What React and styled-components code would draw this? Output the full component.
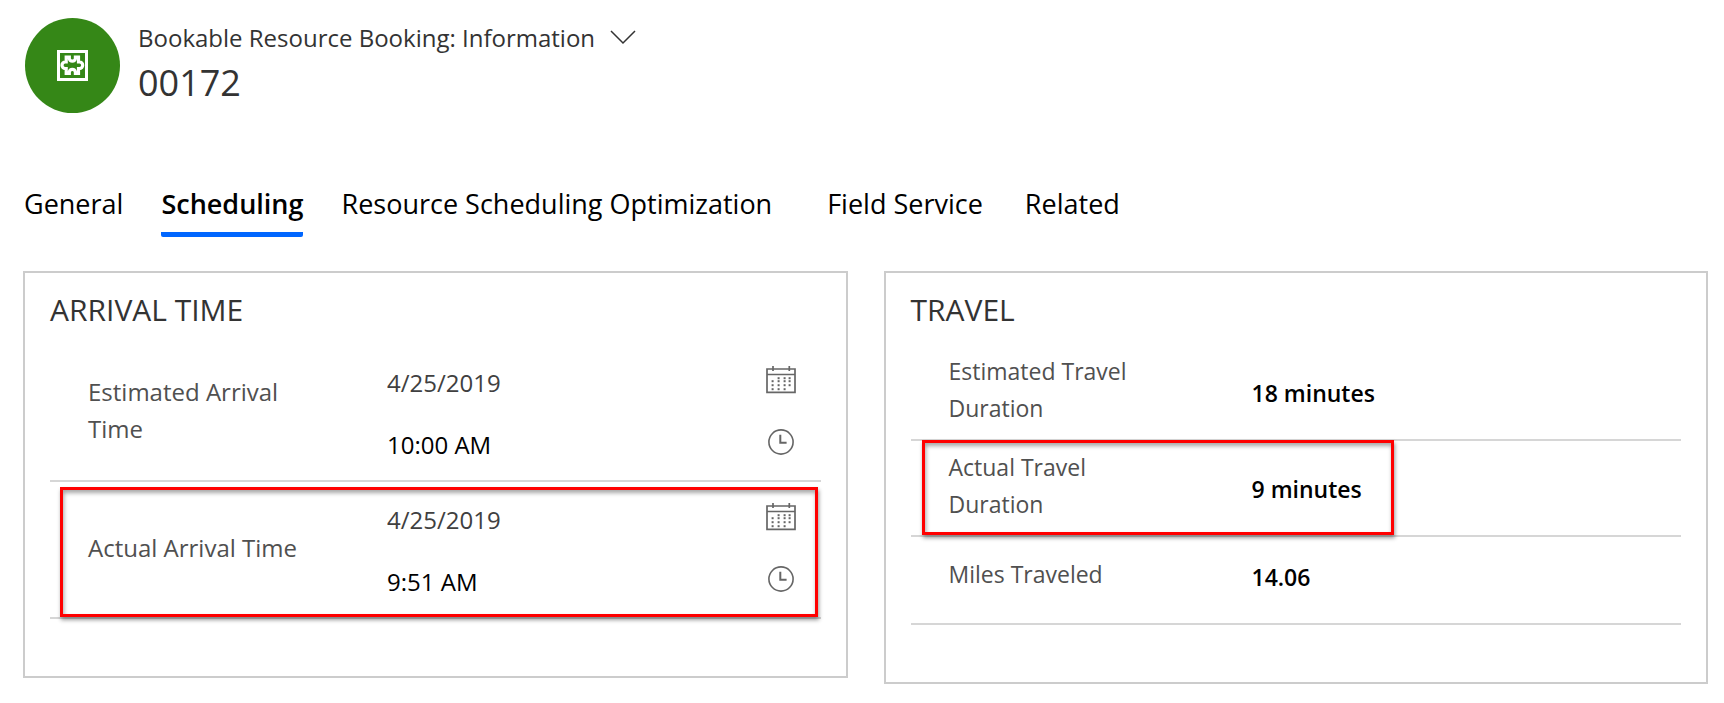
import React, { useId, useState } from "react";
import styled, { createGlobalStyle } from "styled-components";

const GlobalStyle = createGlobalStyle`
  * { box-sizing: border-box; }
  body {
    margin: 0;
    background: #fff;
    color: #333;
    font-family: "Segoe UI", "Open Sans", "Noto Sans", sans-serif;
    font-size: 24px;
  }
  button, input { font: inherit; color: inherit; }
`;

const Page = styled.main`
  padding: 18px 16px 18px 23px;
`;

const Header = styled.header`
  display: flex;
  align-items: flex-start;
  gap: 18px;
  padding-left: 2px;
`;

const EntityBadge = styled.div`
  flex: none;
  display: grid;
  place-items: center;
  width: 95px;
  height: 95px;
  border-radius: 50%;
  background: #358717;
`;

const HeaderText = styled.div`
  display: flex;
  flex-direction: column;
`;

const FormName = styled.div`
  display: flex;
  align-items: center;
  gap: 15px;
  line-height: 40px;
`;

const RecordTitle = styled.h1`
  margin: 0;
  font-size: 36px;
  font-weight: 400;
  line-height: 50px;
`;

const PlainButton = styled.button`
  display: flex;
  flex: none;
  padding: 0;
  border: 0;
  background: none;
  cursor: pointer;
`;

const PickerButton = styled(PlainButton)`
  margin-right: 25px;
  padding-bottom: 6px;
  color: #666;
`;

const TabList = styled.nav`
  display: flex;
  gap: 38px;
  margin-top: 67px;
  padding-left: 1px;
`;

const Tab = styled.button`
  margin-right: ${(p) => p.$extraSpace || "0"};
  padding: 0 0 9px;
  border: 0;
  background: linear-gradient(#0066ff, #0066ff) bottom / 100% ${(p) => (p.$active ? "5px" : "0")} no-repeat;
  border-radius: 2px;
  color: #000;
  font-size: 27px;
  font-weight: ${(p) => (p.$active ? 600 : 400)};
  line-height: 48px;
  white-space: nowrap;
  cursor: pointer;
`;

const Panels = styled.div`
  display: grid;
  grid-template-columns: 1fr 1fr;
  align-items: start;
  gap: 36px;
  margin-top: 34px;
`;

const Panel = styled.section`
  padding: 17px 25px 57px;
  border: 2px solid #ccc;
`;

const PanelTitle = styled.h2`
  margin: 0 0 15px;
  font-size: 30px;
  font-weight: 400;
  line-height: 40px;
`;

const Row = styled.div`
  position: relative;
  display: grid;
  grid-template-columns: ${(p) => p.$labelWidth} 1fr;
  align-items: center;
  border-bottom: 2px solid #d6d6d6;
`;

const DateTimeRow = styled(Row)`
  padding: 7px 0 4px;
`;

const ValueRow = styled(Row)`
  min-height: ${(p) => (p.$short ? "88px" : "96px")};
  padding-bottom: ${(p) => (p.$short ? "12px" : "4px")};
  font-size: 23px;
`;

const Label = styled.label`
  padding: 0 80px 0 38px;
  color: #505050;
  line-height: 37px;
`;

const DateTimeLabel = styled(Label)`
  padding-right: 70px;
  padding-bottom: 8px;
`;

const Field = styled.div`
  display: flex;
  align-items: center;
  height: 62px;
`;

const TextInput = styled.input`
  flex: 1;
  min-width: 0;
  width: 100%;
  padding: 0;
  border: 0;
  outline: 0;
  background: none;
  line-height: 32px;
  color: ${(p) => (p.$muted ? "#404040" : "#000")};
`;

const ValueInput = styled(TextInput)`
  padding-top: 6px;
  font-weight: 600;
`;

const Highlight = styled.div`
  position: absolute;
  top: ${(p) => p.$top};
  left: ${(p) => p.$left};
  width: ${(p) => p.$width};
  bottom: 0;
  border: 3px solid #f00;
  box-shadow: 1px 3px 4px rgba(0, 0, 0, 0.4), inset 1px 3px 4px rgba(0, 0, 0, 0.35);
  pointer-events: none;
`;

const PuzzleIcon = () => (
  <svg width="31" height="31" viewBox="0 0 31 31" fill="none" stroke="#fff" aria-hidden="true">
    <rect x="1.5" y="1.5" width="28" height="28" strokeWidth="3" />
    <path
      d="M9.2 7.2H12.3V8.5A3.1 3.2 0 0 0 18.4 8.5V7.2H21.5V12H22.5A3.2 3.3 0 0 1 22.5 18.6H21.5V23.4H18.4V22.1A3.1 3.2 0 0 0 12.3 22.1V23.4H9.2V18.6H8.2A3.2 3.3 0 0 1 8.2 12H9.2Z"
      strokeWidth="3.2"
    />
  </svg>
);

const ChevronIcon = () => (
  <svg width="26" height="16" viewBox="0 0 26 16" fill="none" stroke="#333" strokeWidth="1.5" aria-hidden="true">
    <path d="M1 1L13 13L25 1" />
  </svg>
);

const calendarDots = [
  [12, 12], [18, 12], [23, 12],
  [6, 15], [12, 15], [18, 15], [23, 15],
  [6, 19], [12, 19], [18, 19], [23, 19],
  [6, 23], [12, 23], [18, 23],
];

const CalendarIcon = () => (
  <svg width="30" height="28" viewBox="0 0 30 28" aria-hidden="true">
    <path d="M1 3H29V26.3H1ZM1 8.5H29M7 0V5M23.3 0V5" fill="none" stroke="currentColor" strokeWidth="1.7" />
    {calendarDots.map(([x, y]) => (
      <rect key={`${x}-${y}`} x={x - 0.4} y={y - 0.8} width="2" height="2" fill="currentColor" />
    ))}
  </svg>
);

const ClockIcon = () => (
  <svg width="30" height="28" viewBox="0 0 30 28" fill="none" stroke="currentColor" aria-hidden="true">
    <circle cx="15" cy="14" r="12.1" strokeWidth="1.6" />
    <path d="M14.3 6.8V14.7H20.6" strokeWidth="2" />
  </svg>
);

function DateTimeField({ label, date, time, highlighted }) {
  const id = useId();
  return (
    <DateTimeRow $labelWidth="337px">
      <DateTimeLabel htmlFor={id}>{label}</DateTimeLabel>
      <div>
        <Field>
          <TextInput id={id} defaultValue={date} $muted />
          <PickerButton type="button" aria-label={`Choose date, ${label}`}>
            <CalendarIcon />
          </PickerButton>
        </Field>
        <Field>
          <TextInput aria-label={`${label}, time`} defaultValue={time} />
          <PickerButton type="button" aria-label={`Choose time, ${label}`}>
            <ClockIcon />
          </PickerButton>
        </Field>
      </div>
      {highlighted && <Highlight $top="5px" $left="10px" $width="calc(100% - 13px)" />}
    </DateTimeRow>
  );
}

function ValueField({ label, value, short, highlighted }) {
  const id = useId();
  return (
    <ValueRow $labelWidth="341px" $short={short}>
      <Label htmlFor={id}>{label}</Label>
      <ValueInput id={id} defaultValue={value} />
      {highlighted && <Highlight $top="-1px" $left="11px" $width="472px" />}
    </ValueRow>
  );
}

const tabs = [
  { name: "General" },
  { name: "Scheduling" },
  { name: "Resource Scheduling Optimization", extraSpace: "17px" },
  { name: "Field Service", extraSpace: "4px" },
  { name: "Related" },
];

export default function App() {
  const [active, setActive] = useState("Scheduling");
  return (
    <>
      <GlobalStyle />
      <Page>
        <Header>
          <EntityBadge>
            <PuzzleIcon />
          </EntityBadge>
          <HeaderText>
            <FormName>
              Bookable Resource Booking: Information
              <PlainButton type="button" aria-label="Switch form">
                <ChevronIcon />
              </PlainButton>
            </FormName>
            <RecordTitle>00172</RecordTitle>
          </HeaderText>
        </Header>
        <TabList role="tablist">
          {tabs.map(({ name, extraSpace }) => (
            <Tab
              key={name}
              type="button"
              role="tab"
              aria-selected={name === active}
              $active={name === active}
              $extraSpace={extraSpace}
              onClick={() => setActive(name)}
            >
              {name}
            </Tab>
          ))}
        </TabList>
        <Panels>
          <Panel>
            <PanelTitle>ARRIVAL TIME</PanelTitle>
            <DateTimeField label="Estimated Arrival Time" date="4/25/2019" time="10:00 AM" />
            <DateTimeField label="Actual Arrival Time" date="4/25/2019" time="9:51 AM" highlighted />
          </Panel>
          <Panel>
            <PanelTitle>TRAVEL</PanelTitle>
            <ValueField label="Estimated Travel Duration" value="18 minutes" />
            <ValueField label="Actual Travel Duration" value="9 minutes" highlighted />
            <ValueField label="Miles Traveled" value="14.06" short />
          </Panel>
        </Panels>
      </Page>
    </>
  );
}
